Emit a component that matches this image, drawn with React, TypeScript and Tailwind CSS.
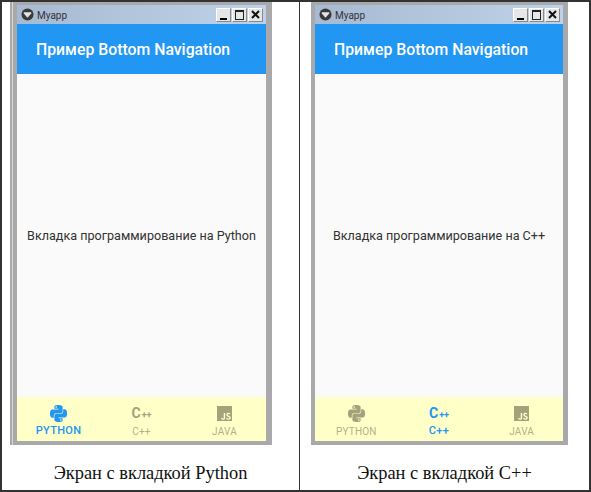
import { SiPython, SiJavascript } from "react-icons/si";
import { ReactNode } from "react";

const blue = "text-[#2196f3]";
const grey = "text-[#a3a27a]";

function NavItem(props: { icon: ReactNode; label: string; active?: boolean }) {
  return (
    <div className={`flex flex-1 flex-col items-center ${props.active ? blue : grey}`}>
      <div className="flex h-[20px] items-center justify-center">{props.icon}</div>
      <span
        className={`leading-[12px] ${
          props.active
            ? "mt-[2px] text-[11px] font-medium tracking-[0.3px]"
            : "mt-[3px] text-[10px] tracking-[0.2px] text-[#b3b288]"
        }`}
      >
        {props.label}
      </span>
    </div>
  );
}

function CppIcon() {
  return (
    <span className="flex items-baseline text-[14px] font-bold leading-none">
      C<span className="ml-px text-[9px]">++</span>
    </span>
  );
}

function TitleButton(props: { children: ReactNode; className?: string }) {
  return (
    <div
      className={`flex h-[14px] w-[15px] justify-center border border-b-[#8a8a8a] border-l-white border-r-[#8a8a8a] border-t-white bg-[#e6e6e6] ${
        props.className ?? "items-center"
      }`}
    >
      {props.children}
    </div>
  );
}

function Phone(props: { text: string; active: string; className: string; frameClass: string }) {
  return (
    <div className={`${props.className} bg-[#d6d6d8]`}>
      <div className={`flex h-[443px] flex-col border-b-[4px] border-t-[3px] border-[#a9a9ab] ${props.frameClass}`}>
        <div className="flex h-[19px] shrink-0 items-center bg-gradient-to-r from-[#a7bad3] to-[#bdd2e9] px-[3px]">
          <svg viewBox="0 0 14 14" className="ml-px h-[13px] w-[13px]">
            <circle cx="7" cy="7" r="6.5" fill="#3a3a3a" />
            <path d="M3 4.5h8v1.5L7 10.5 3 6z" fill="#e4e4e4" />
          </svg>
          <span className="ml-[3px] pt-px text-[10px] text-[#333]">Myapp</span>
          <div className="ml-auto flex gap-px">
            <TitleButton className="items-end pb-[1px]">
              <div className="h-[2px] w-[7px] bg-black" />
            </TitleButton>
            <TitleButton>
              <div className="h-[10px] w-[9px] border border-t-2 border-[#222]" />
            </TitleButton>
            <TitleButton>
              <svg viewBox="0 0 9 9" className="h-[9px] w-[9px]">
                <path d="M1 1l7 7M8 1l-7 7" stroke="#111" strokeWidth="2" />
              </svg>
            </TitleButton>
          </div>
        </div>
        <div className="flex h-[50px] shrink-0 items-center bg-[#2196f3] pl-[19px] pt-px text-[15.8px] font-medium text-white">
          Пример Bottom Navigation
        </div>
        <div className="flex flex-1 items-center justify-center bg-[#fafafa] pt-[2px] text-[12.6px] text-[#333]">
          {props.text}
        </div>
        <div className="flex h-[44px] shrink-0 items-start bg-[#ffffc8] pt-[6px]">
          <NavItem icon={<SiPython size={17} />} label="PYTHON" active={props.active === "python"} />
          <NavItem icon={<CppIcon />} label="C++" active={props.active === "cpp"} />
          <NavItem icon={<SiJavascript size={15} />} label="JAVA" />
        </div>
      </div>
    </div>
  );
}

export default function App() {
  return (
    <div className="h-[492px] w-[591px] bg-white font-['Roboto',sans-serif]">
      <div className="flex h-[492px] border-x-2 border-y-2 border-[#333]">
        <div className="w-[298px] shrink-0 border-r border-[#333]">
          <Phone
            text="Вкладка программирование на Python"
            active="python"
            className="ml-[8px] w-[262px] border-l-2 border-[#a9a9ab] pl-px"
            frameClass="border-l-[4px] border-r-[6px]"
          />
          <p className="mt-[18px] text-center font-['Liberation_Serif',serif] text-[18.4px] leading-[20px] text-[#111]">
            Экран с вкладкой Python
          </p>
        </div>
        <div className="flex-1">
          <Phone
            text="Вкладка программирование на C++"
            active="cpp"
            className="ml-[11px] w-[257px] border-l-2 border-[#a9a9ab]"
            frameClass="border-l-[2px] border-r-[5px]"
          />
          <p className="mt-[18px] text-center font-['Liberation_Serif',serif] text-[18.4px] leading-[20px] text-[#111]">
            Экран с вкладкой C++
          </p>
        </div>
      </div>
    </div>
  );
}
